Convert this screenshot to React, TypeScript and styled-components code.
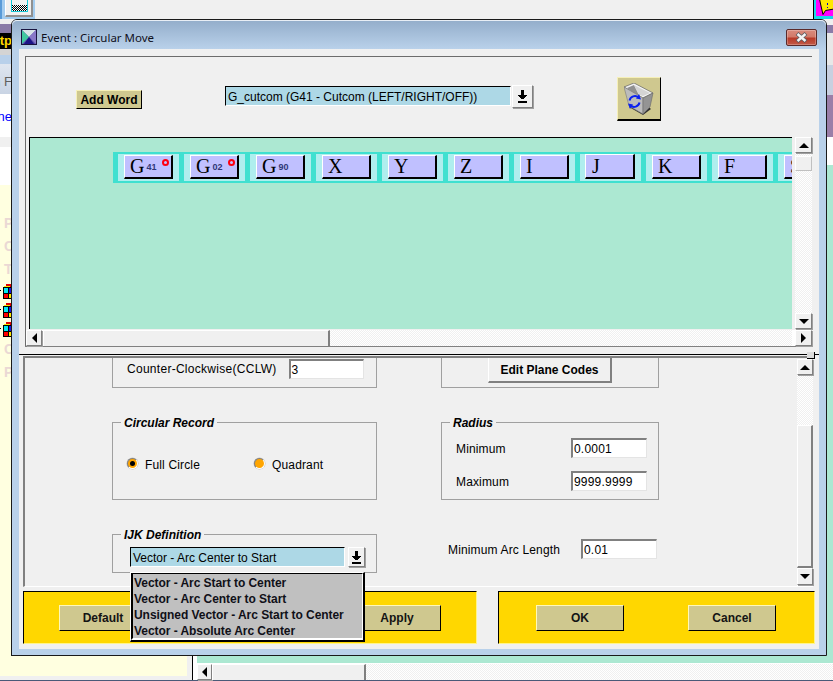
import React from "react";
import styled, { createGlobalStyle } from "styled-components";

const Global = createGlobalStyle`
  html, body { margin: 0; padding: 0; background: #f0f0f0; }
  body { font-family: "Liberation Sans", Arial, sans-serif; font-size: 12px; color: #000; }
  * { box-sizing: border-box; }
`;

const dither = `repeating-conic-gradient(#f0f0f0 0 25%, #fff 0 50%) 0 0 / 2px 2px`;

const Desktop = styled.div`
  position: relative;
  width: 833px;
  height: 681px;
  overflow: hidden;
  display: flex;
  flex-direction: column;
`;
const TopStrip = styled.div`
  height: 19px;
  display: flex;
  justify-content: space-between;
  background: #f0f0f0;
`;
const ToolGroup = styled.div`
  width: 35px;
  height: 19px;
  padding: 0 2px 2px 5px;
  background: linear-gradient(90deg, #5a9bd8 0 2px, #a4cdf0 2px);
`;
const ToolButton = styled.div`
  width: 28px;
  height: 17px;
  background: #f0f0f0;
  border-right: 2px solid #909090;
  border-bottom: 2px solid #909090;
  border-left: 1px solid #fff;
  padding-left: 5px;
`;
const ToolDither = styled.div`
  width: 17px;
  height: 12px;
  border: 1px solid #18c8d8;
  border-top: 0;
  background: linear-gradient(#f0f0f0 0 5px, transparent 5px),
    repeating-conic-gradient(#000 0 25%, #fff 0 50%) 0 0 / 2px 2px;
`;
const CornerIcon = styled.div`
  width: 20px;
  height: 19px;
  border-left: 1px solid #000;
  line-height: 0;
`;
const Middle = styled.div`
  height: 637px;
  display: flex;
  justify-content: space-between;
`;
const Rail = styled.div<{ $w: number }>`
  width: ${(p) => p.$w}px;
  display: flex;
  flex-direction: column;
  overflow: hidden;
`;
const Band = styled.div<{ $h: number; $bg: string; $fg?: string; $bold?: boolean; $pad?: number }>`
  flex: 0 0 ${(p) => p.$h}px;
  height: ${(p) => p.$h}px;
  padding-top: ${(p) => p.$pad || 0}px;
  background: ${(p) => p.$bg};
  color: ${(p) => p.$fg || "#000"};
  font-weight: ${(p) => (p.$bold ? 700 : 400)};
  font-size: 13px;
  line-height: ${(p) => p.$h}px;
  white-space: nowrap;
  overflow: hidden;
  display: flex;
  justify-content: flex-end;
`;
const YellowRail = styled.div`
  flex: 1;
  background: #ffffe0;
  padding-top: 27px;
  display: flex;
  flex-direction: column;
  border-right: 1px solid #000;
`;
const FadedLetter = styled.div`
  height: 23px;
  line-height: 23px;
  font-size: 14px;
  font-weight: 700;
  color: #ead8d4;
  padding-left: 4px;
`;
const CubeStack = styled.div`
  height: 54px;
  margin-top: 3px;
  flex: none;
`;
const CubeRow = styled.div`
  height: 19px;
  line-height: 0;
`;
const BottomStrip = styled.div`
  height: 25px;
  display: flex;
  border-bottom: 1px solid #4a5a78;
  background: #f0f0f0;
`;
const YellowFoot = styled.div`
  width: 187px;
  height: 20px;
  background: #ffffe0;
`;
const FootGap = styled.div`
  width: 6px;
  border-right: 1px solid #000;
`;
const FootRight = styled.div`
  flex: 1;
  display: flex;
  flex-direction: column;
  padding-left: 4px;
  background: #fff;
`;
const FootTeal = styled.div`
  height: 7px;
  background: #ace8d2;
`;
const FootScroll = styled.div`
  flex: 1;
  margin-top: 1px;
  display: flex;
  background: ${dither};
`;
const FootThumb = styled.div`
  width: 154px;
  background: #f0f0f0;
  border-top: 1px solid #fff;
  border-left: 1px solid #fff;
  border-right: 2px solid #808080;
`;

/* dialog window */
const Dialog = styled.div`
  position: absolute;
  left: 11px;
  top: 19px;
  width: 816px;
  height: 637px;
  border: 1px solid #1a1a1a;
  border-radius: 6px 6px 0 0;
  background: #b9d1ea;
  padding: 0 7px 6px;
  display: flex;
  flex-direction: column;
`;
const TitleBar = styled.div`
  height: 29px;
  margin: 0 -7px;
  padding: 9px 9px 0 9px;
  display: flex;
  align-items: flex-start;
  border-radius: 5px 5px 0 0;
  background: linear-gradient(#93adca, #b9d1ea);
  box-shadow: inset 0 1px 0 #e8eef5;
`;
const TitleText = styled.span`
  margin: 1px 0 0 4px;
  flex: 1;
  font-family: "Noto Sans", sans-serif;
  font-size: 11.5px;
  line-height: 16px;
  color: #10101c;
`;
const CloseButton = styled.div`
  width: 31px;
  height: 17px;
  border: 1px solid #5a2a2a;
  border-radius: 2px;
  background: linear-gradient(#d98a7c 0, #d27a6a 45%, #b83a28 55%, #c25a48 100%);
  box-shadow: inset 0 0 0 1px rgba(255, 255, 255, 0.25);
  display: flex;
  align-items: center;
  justify-content: center;
  line-height: 0;
`;
const Client = styled.div`
  position: relative;
  flex: 1;
  background: #f0f0f0;
  padding-top: 7px;
  display: flex;
  flex-direction: column;
`;

/* upper pane */
const UpperPane = styled.div`
  margin-left: 6px;
  width: 787px;
  height: 291px;
  border-top: 1px solid #6c6c6c;
  border-left: 1px solid #6c6c6c;
  border-bottom: 2px solid #808080;
  display: flex;
  flex-direction: column;
`;
const WordBar = styled.div`
  height: 80px;
  flex: none;
  display: flex;
  align-items: flex-start;
`;
const AddWord = styled.div`
  margin: 33px 0 0 50px;
  width: 66px;
  height: 19px;
  background: #cfc88f;
  border: 1px solid;
  border-color: #f6f0b8 #000 #000 #f6f0b8;
  font-weight: 700;
  line-height: 18px;
  text-align: center;
`;
const ComboField = styled.div<{ $w: number }>`
  width: ${(p) => p.$w}px;
  height: 20px;
  background: #add8e6;
  border: 1px solid;
  border-color: #000 #fff #fff #000;
  padding-left: 2px;
  line-height: 20px;
  white-space: nowrap;
  overflow: hidden;
`;
const ComboWrap = styled.div`
  margin: 28px 0 0 83px;
  display: flex;
  align-items: flex-start;
  gap: 1px;
  padding-top: 1px;
`;
const ArrowButton = styled.div<{ $w: number; $h: number; $up?: number }>`
  width: ${(p) => p.$w}px;
  height: ${(p) => p.$h}px;
  margin-top: ${(p) => -(p.$up || 0)}px;
  background: #f0f0f0;
  border: 1px solid;
  border-color: #fff #808080 #808080 #fff;
  box-shadow: 1px 1px 0 #a0a0a0;
  display: flex;
  align-items: center;
  justify-content: center;
  line-height: 0;
  flex: none;
`;
const TrashButton = styled.div`
  margin: 20px 0 0 84px;
  width: 44px;
  height: 44px;
  background: #cfc88f;
  border: 1px solid;
  border-color: #f6f0b8 #000 #000 #f6f0b8;
  border-bottom-width: 2px;
  padding: 5px 0 0 6px;
  line-height: 0;
`;
const CanvasRow = styled.div`
  height: 192px;
  flex: none;
  display: flex;
`;
const Canvas = styled.div`
  margin-left: 3px;
  width: 763px;
  background: #ace8d2;
  border-top: 1px solid #000;
  border-left: 1px solid #000;
  padding: 14px 0 0 83px;
  overflow: hidden;
`;
const WordStrip = styled.div`
  display: flex;
  width: max-content;
`;
const WordTile = styled.div`
  width: 66px;
  height: 31px;
  border-style: solid;
  border-color: #40e0d0;
  border-width: 2px 0 2px 5px;
  background: #afeeee;
  padding: 1px 0 0 6px;
`;
const WordButton = styled.div<{ $focus?: boolean }>`
  position: relative;
  width: ${(p) => (p.$focus ? 50 : 49)}px;
  height: ${(p) => (p.$focus ? 25 : 24)}px;
  margin: ${(p) => (p.$focus ? "-1px 0 0 -1px" : "0")};
  background: #c0c0ff;
  border: 1px solid;
  border-width: 1px 2px 2px 1px;
  border-color: #fff #000 #000 #fff;
  padding: ${(p) => (p.$focus ? "1px 0 0 6px" : "0 0 0 5px")};
  display: flex;
  align-items: center;
  gap: 2px;
`;
const Letter = styled.span`
  font-family: "Liberation Serif", "Times New Roman", serif;
  font-size: 20px;
  line-height: 20px;
  margin-bottom: 2px;
`;
const SubCode = styled.span`
  font-size: 9px;
  font-weight: 700;
  color: #303878;
`;
const RedRing = styled.span`
  position: absolute;
  top: 3px;
  right: 2px;
  width: 7px;
  height: 7px;
  border: 2px solid #ff0010;
  border-radius: 50%;
`;
const VScroll = styled.div`
  margin-left: 3px;
  width: 17px;
  display: flex;
  flex-direction: column;
  background: ${dither};
`;
const VThumb = styled.div`
  height: 15px;
  margin-top: 3px;
  background: #f0f0f0;
  border: 1px solid;
  border-color: #fff #c0c0c0 #c0c0c0 #fff;
`;
const Fill = styled.div`
  flex: 1;
`;
const HRow = styled.div`
  margin-top: 1px;
  flex: 1;
  display: flex;
  background: #fff;
`;
const HScroll = styled.div`
  width: 766px;
  display: flex;
  background: ${dither};
`;
const HThumb = styled.div`
  width: 287px;
  margin-left: 1px;
  background: #f0f0f0;
  border-top: 1px solid #fff;
  border-left: 1px solid #fff;
  border-right: 2px solid #808080;
`;
const CornerColumn = styled.div`
  margin-left: 3px;
  line-height: 0;
  background: #f0f0f0;
`;

/* sash */
const Sash = styled.div`
  position: relative;
  flex: none;
  margin: 7px 0 1px;
  height: 1px;
  background: #000;
`;
const SashHandle = styled.div`
  position: absolute;
  left: 788px;
  top: -2px;
  width: 8px;
  height: 7px;
  background: #dcdcdc;
  border-right: 1px solid #000;
  border-bottom: 1px solid #000;
`;

/* lower pane */
const LowerPane = styled.div`
  flex: none;
  margin-left: 4px;
  width: 790px;
  height: 231px;
  border-top: 2px solid #808080;
  border-left: 2px solid #808080;
  border-bottom: 1px solid #fff;
  display: flex;
`;
const FormArea = styled.div`
  flex: 1;
  overflow: hidden;
`;
const FormGrid = styled.div`
  margin: -20px 0 0 87px;
  display: grid;
  grid-template-columns: 265px 218px;
  grid-template-rows: 50px 78px 39px;
  column-gap: 64px;
  row-gap: 34px;
`;
const Group = styled.div`
  position: relative;
  border: 1px solid #a0a0a0;
`;
const Legend = styled.span`
  position: absolute;
  top: -7px;
  left: 8px;
  padding: 0 3px;
  background: #f0f0f0;
  font-weight: 700;
  font-style: italic;
  line-height: 14px;
  white-space: nowrap;
`;
const CcwGroup = styled(Group)`
  display: flex;
  align-items: flex-end;
  gap: 12px;
  padding: 0 0 8px 14px;
`;
const PlaneGroup = styled(Group)`
  display: flex;
  justify-content: center;
  align-items: flex-end;
  padding-bottom: 4px;
`;
const RadioGroup = styled(Group)`
  display: flex;
  align-items: center;
  padding: 5px 0 0 14px;
`;
const RadioItem = styled.div`
  flex: 0 0 127px;
  display: flex;
  align-items: center;
  gap: 7px;
`;
const Radio = styled.span<{ $on?: boolean }>`
  width: 11px;
  height: 11px;
  border-radius: 50%;
  background: #ffa500;
  border: 1px solid;
  border-color: #808080 #fff #fff #808080;
  box-shadow: 0 0 0 0.5px #c0c0c0;
  display: flex;
  align-items: center;
  justify-content: center;
  &::after {
    content: "";
    width: 5px;
    height: 5px;
    border-radius: 50%;
    background: ${(p) => (p.$on ? "#000" : "transparent")};
  }
`;
const RadiusGroup = styled(Group)`
  display: flex;
  flex-direction: column;
  gap: 13px;
  padding: 15px 11px 0 14px;
`;
const FieldRow = styled.div`
  height: 20px;
  display: flex;
  align-items: center;
  justify-content: space-between;
`;
const Label = styled.span<{ $wide?: boolean }>`
  margin-top: 2px;
  line-height: 20px;
  letter-spacing: ${(p) => (p.$wide ? 0.28 : 0.15)}px;
  white-space: nowrap;
`;
const NumberBox = styled.div<{ $w?: number }>`
  width: ${(p) => p.$w || 75}px;
  height: 20px;
  flex: none;
  background: #fff;
  border: 1px solid;
  border-width: 2px 1px 1px 2px;
  border-color: #808080 #e4e4e4 #e4e4e4 #808080;
  padding-left: 1px;
  line-height: 18px;
  letter-spacing: 0.2px;
`;
const ArcRow = styled.div`
  display: flex;
  align-items: center;
  justify-content: space-between;
  align-self: start;
  height: 20px;
  margin: 5px 2px 0 7px;
`;
const IjkGroup = styled(Group)`
  display: flex;
  gap: 3px;
  padding: 12px 0 0 17px;
  align-items: flex-start;
`;
const EditButton = styled.div`
  width: 124px;
  height: 26px;
  background: #f0f0f0;
  border-style: solid;
  border-width: 1px 2px 2px 1px;
  border-color: #fff #808080 #808080 #fff;
  text-align: center;
  font-weight: 700;
  line-height: 25px;
`;
const LowerScroll = styled.div`
  flex: none;
  margin-top: 1px;
  width: 16px;
  height: 227px;
  display: flex;
  flex-direction: column;
  background: ${dither};
`;
const LowerThumb = styled.div`
  height: 143px;
  margin-top: 50px;
  background: #f0f0f0;
  border-style: solid;
  border-width: 1px 2px 2px 1px;
  border-color: #fff #808080 #808080 #fff;
`;

/* dropdown */
const Dropdown = styled.div`
  position: absolute;
  left: 111px;
  top: 523px;
  width: 235px;
  height: 70px;
  background: #c0c0c0;
  border-style: solid;
  border-width: 1px 2px 2px 1px;
  border-color: #fff #000 #000 #fff;
  z-index: 3;
`;
const DropList = styled.div`
  height: 100%;
  border-style: solid;
  border-width: 1px 1px 2px 2px;
  border-color: #000 #fff #fff #000;
  padding: 1px 0 0 1px;
`;
const DropItem = styled.div`
  height: 16px;
  line-height: 16px;
  font-weight: 700;
  letter-spacing: -0.05px;
  color: #101018;
  white-space: nowrap;
`;

/* footer */
const Footer = styled.div`
  flex: none;
  margin: 4px 0 0 4px;
  display: flex;
  gap: 21px;
`;
const FooterPanel = styled.div<{ $w: number; $between?: boolean }>`
  width: ${(p) => p.$w}px;
  height: 53px;
  background: #ffd700;
  border-style: solid;
  border-width: 1px;
  border-color: #000 #fff58c #fff58c #000;
  display: flex;
  align-items: center;
  gap: 64px;
  justify-content: ${(p) => (p.$between ? "space-between" : "flex-start")};
  padding: 0 35px 0 ${(p) => (p.$between ? 35 : 37)}px;
`;
const ActionButton = styled.div`
  width: 88px;
  height: 26px;
  background: #cfc88f;
  border: 1px solid;
  border-color: #fff8b8 #000 #000 #fff8b8;
  text-align: center;
  font-weight: 700;
  line-height: 24px;
  color: #141414;
`;

const Tri: React.FC<{ dir: "up" | "down" | "left" | "right" }> = ({ dir }) => {
  const pts = {
    up: "0,5 5,0 10,5",
    down: "0,0 10,0 5,5",
    left: "5,0 5,10 0,5",
    right: "0,0 0,10 5,5",
  }[dir];
  const horizontal = dir === "up" || dir === "down";
  return (
    <svg width={horizontal ? 10 : 5} height={horizontal ? 5 : 10}>
      <polygon points={pts} fill="#000" />
    </svg>
  );
};
const DownBar = () => (
  <svg width="13" height="15" viewBox="0 0 13 15" shapeRendering="crispEdges">
    <path d="M5 1h3v5h3v1h-1v1h-1v1h-1v1h-3v-1h-1v-1h-1v-1h-1v-1h3zM2 12h9v2h-9z" fill="#000" />
  </svg>
);
const TitleIcon = () => (
  <svg width="16" height="16" viewBox="0 0 16 16">
    <rect x="0.5" y="0.5" width="15" height="15" fill="#5a4ea8" stroke="#1a1440" />
    <polygon points="1,1 15,1 8,8" fill="#d8e4e8" />
    <polygon points="1,1 8,8 1,15" fill="#40c8a0" />
    <polygon points="15,1 8,8 15,15" fill="#8878c8" />
    <polygon points="3,15 8,8 13,15" fill="#1c1488" />
  </svg>
);
const CloseX = () => (
  <svg width="15" height="11" viewBox="0 0 15 11">
    <path d="M3 1.5 L12 9.5 M12 1.5 L3 9.5" stroke="#5a5a60" strokeWidth="4" />
    <path d="M3.5 2 L11.5 9 M11.5 2 L3.5 9" stroke="#f4f4f4" strokeWidth="2.4" />
  </svg>
);
const RecycleBin = () => (
  <svg width="30" height="32" viewBox="0 0 30 32">
    <polygon points="5,24 19,32 27,26 21,21" fill="#303030" />
    <polygon points="0,4 10,0 29,10 19,15" fill="#f4f4f4" stroke="#606060" strokeWidth="0.7" />
    <polygon points="3,5 10,2 15,12 13,12.5" fill="#909090" />
    <polygon points="10,2 26,10 19,13 15,12" fill="#d4d4d4" />
    <polygon points="0,4 19,15 19,31 5,23" fill="#bcbcbc" stroke="#787878" strokeWidth="0.6" />
    <polygon points="19,15 29,10 26,24 19,31" fill="#949494" stroke="#686868" strokeWidth="0.6" />
    <path d="M5.5 17.5 a5.5 5.5 0 0 1 9 -3 M15.5 19.5 a5.5 5.5 0 0 1 -9 3" fill="none" stroke="#0a20f0" strokeWidth="2" />
    <polygon points="15,11 17,16.5 12,15.5" fill="#0a20f0" />
    <polygon points="6,26 4,20.5 9,21.5" fill="#0a20f0" />
  </svg>
);
const Cube = () => (
  <svg width="12" height="15" viewBox="0 0 12 15" shapeRendering="crispEdges">
    <rect x="0" y="6" width="1" height="1" fill="#000" />
    <rect x="3" y="3" width="9" height="12" fill="#000" />
    <rect x="4" y="4" width="4" height="5" fill="#00e8f0" />
    <rect x="9" y="4" width="3" height="5" fill="#1818e0" />
    <rect x="4" y="10" width="4" height="4" fill="#ff0000" />
    <rect x="9" y="10" width="3" height="4" fill="#ffe800" />
    <rect x="6" y="0" width="6" height="3" fill="#e00000" />
    <rect x="4" y="2" width="6" height="1" fill="#ffe800" />
  </svg>
);
const Heart = () => (
  <svg width="19" height="19" viewBox="0 0 19 19">
    <rect width="19" height="19" fill="#ff00ff" />
    <rect width="2" height="19" fill="#18d8e8" />
    <rect y="16" width="19" height="3" fill="#18d8e8" />
    <path d="M5.5 -1 L7 6 L9 14.5 L11.5 10.5 L20 9 V-1 z" fill="#ffe800" stroke="#000" strokeWidth="1" />
    <rect x="13" y="7" width="1" height="1" fill="#0000c0" />
    <rect x="13" y="3" width="1" height="2" fill="#0000c0" />
  </svg>
);

const words: { l: string; s?: string; ring?: boolean; focus?: boolean }[] = [
  { l: "G", s: "41", ring: true },
  { l: "G", s: "02", ring: true },
  { l: "G", s: "90" },
  { l: "X" },
  { l: "Y" },
  { l: "Z" },
  { l: "I" },
  { l: "J", focus: true },
  { l: "K" },
  { l: "F" },
  { l: "S" },
];

export default function App() {
  return (
    <Desktop>
      <Global />
      <TopStrip>
        <ToolGroup>
          <ToolButton>
            <ToolDither />
          </ToolButton>
        </ToolGroup>
        <CornerIcon>
          <Heart />
        </CornerIcon>
      </TopStrip>
      <Middle>
        <Rail $w={12}>
          <Band $h={5} $bg="#f0f0f0" />
          <Band $h={9} $bg="#8a7ba8" />
          <Band $h={16} $bg="#000" $fg="#ffd700" $bold>tp</Band>
          <Band $h={6} $bg="#d4d4d4" />
          <Band $h={9} $bg="#b8d0ea" />
          <Band $h={30} $pad={3} $bg="linear-gradient(#dfe6f0,#c9d4e4)" $fg="#606060">n F</Band>
          <Band $h={43} $pad={1} $bg="#fff" $fg="#0000ff">ne</Band>
          <Band $h={10} $bg="#f0f0f0" />
          <Band $h={38} $bg="#fff" />
          <YellowRail>
            <FadedLetter>P</FadedLetter>
            <FadedLetter>C</FadedLetter>
            <FadedLetter>T</FadedLetter>
            <CubeStack>
              <CubeRow><Cube /></CubeRow>
              <CubeRow><Cube /></CubeRow>
              <CubeRow><Cube /></CubeRow>
            </CubeStack>
            <FadedLetter>C</FadedLetter>
            <FadedLetter>P</FadedLetter>
          </YellowRail>
        </Rail>
        <Rail $w={6}>
          <Band $h={6} $bg="#f0f0f0" />
          <Band $h={8} $bg="#8a7ba8" />
          <Band $h={32} $bg="#e8e8e8" />
          <Band $h={30} $bg="#c8d0e0" />
          <Band $h={42} $bg="#9a7fa8" />
          <Band $h={28} $bg="#fff" />
          <Band $h={491} $bg="#ace8d2" />
        </Rail>
      </Middle>
      <BottomStrip>
        <YellowFoot />
        <FootGap />
        <FootRight>
          <FootTeal />
          <FootScroll>
            <ArrowButton $w={15} $h={16}><Tri dir="left" /></ArrowButton>
            <FootThumb />
          </FootScroll>
        </FootRight>
      </BottomStrip>

      <Dialog>
        <TitleBar>
          <TitleIcon />
          <TitleText>Event : Circular Move</TitleText>
          <CloseButton><CloseX /></CloseButton>
        </TitleBar>
        <Client>
          <UpperPane>
            <WordBar>
              <AddWord>Add Word</AddWord>
              <ComboWrap>
                <ComboField $w={286}>G_cutcom (G41 - Cutcom (LEFT/RIGHT/OFF))</ComboField>
                <ArrowButton $w={21} $h={23} $up={1}><DownBar /></ArrowButton>
              </ComboWrap>
              <TrashButton><RecycleBin /></TrashButton>
            </WordBar>
            <CanvasRow>
              <Canvas>
                <WordStrip>
                  {words.map((w, i) => (
                    <WordTile key={i}>
                      <WordButton $focus={w.focus}>
                        <Letter>{w.l}</Letter>
                        {w.s && <SubCode>{w.s}</SubCode>}
                        {w.ring && <RedRing />}
                      </WordButton>
                    </WordTile>
                  ))}
                </WordStrip>
              </Canvas>
              <VScroll>
                <ArrowButton $w={17} $h={16}><Tri dir="up" /></ArrowButton>
                <VThumb />
                <Fill />
                <ArrowButton $w={17} $h={16}><Tri dir="down" /></ArrowButton>
              </VScroll>
            </CanvasRow>
            <HRow>
              <HScroll>
                <ArrowButton $w={16} $h={16}><Tri dir="left" /></ArrowButton>
                <HThumb />
              </HScroll>
              <CornerColumn>
                <ArrowButton $w={17} $h={16}><Tri dir="right" /></ArrowButton>
              </CornerColumn>
            </HRow>
          </UpperPane>
          <Sash><SashHandle /></Sash>
          <LowerPane>
            <FormArea>
              <FormGrid>
                <CcwGroup>
                  <Label $wide>Counter-Clockwise(CCLW)</Label>
                  <NumberBox>3</NumberBox>
                </CcwGroup>
                <PlaneGroup><EditButton>Edit Plane Codes</EditButton></PlaneGroup>
                <RadioGroup>
                  <Legend>Circular Record</Legend>
                  <RadioItem><Radio $on /><Label>Full Circle</Label></RadioItem>
                  <RadioItem><Radio /><Label>Quadrant</Label></RadioItem>
                </RadioGroup>
                <RadiusGroup>
                  <Legend>Radius</Legend>
                  <FieldRow><Label>Minimum</Label><NumberBox $w={76}>0.0001</NumberBox></FieldRow>
                  <FieldRow><Label>Maximum</Label><NumberBox $w={76}>9999.9999</NumberBox></FieldRow>
                </RadiusGroup>
                <IjkGroup>
                  <Legend>IJK Definition</Legend>
                  <ComboField $w={215}>Vector - Arc Center to Start</ComboField>
                  <ArrowButton $w={17} $h={20}><DownBar /></ArrowButton>
                </IjkGroup>
                <ArcRow>
                  <Label>Minimum Arc Length</Label>
                  <NumberBox $w={76}>0.01</NumberBox>
                </ArcRow>
              </FormGrid>
            </FormArea>
            <LowerScroll>
              <ArrowButton $w={16} $h={16}><Tri dir="up" /></ArrowButton>
              <LowerThumb />
              <ArrowButton $w={16} $h={17}><Tri dir="down" /></ArrowButton>
            </LowerScroll>
          </LowerPane>
          <Footer>
            <FooterPanel $w={454} $between>
              <ActionButton>Default</ActionButton>
              <ActionButton>Apply</ActionButton>
            </FooterPanel>
            <FooterPanel $w={317}>
              <ActionButton>OK</ActionButton>
              <ActionButton>Cancel</ActionButton>
            </FooterPanel>
          </Footer>
          <Dropdown>
            <DropList>
              <DropItem>Vector - Arc Start to Center</DropItem>
              <DropItem>Vector - Arc Center to Start</DropItem>
              <DropItem>Unsigned Vector - Arc Start to Center</DropItem>
              <DropItem>Vector - Absolute Arc Center</DropItem>
            </DropList>
          </Dropdown>
        </Client>
      </Dialog>
    </Desktop>
  );
}
